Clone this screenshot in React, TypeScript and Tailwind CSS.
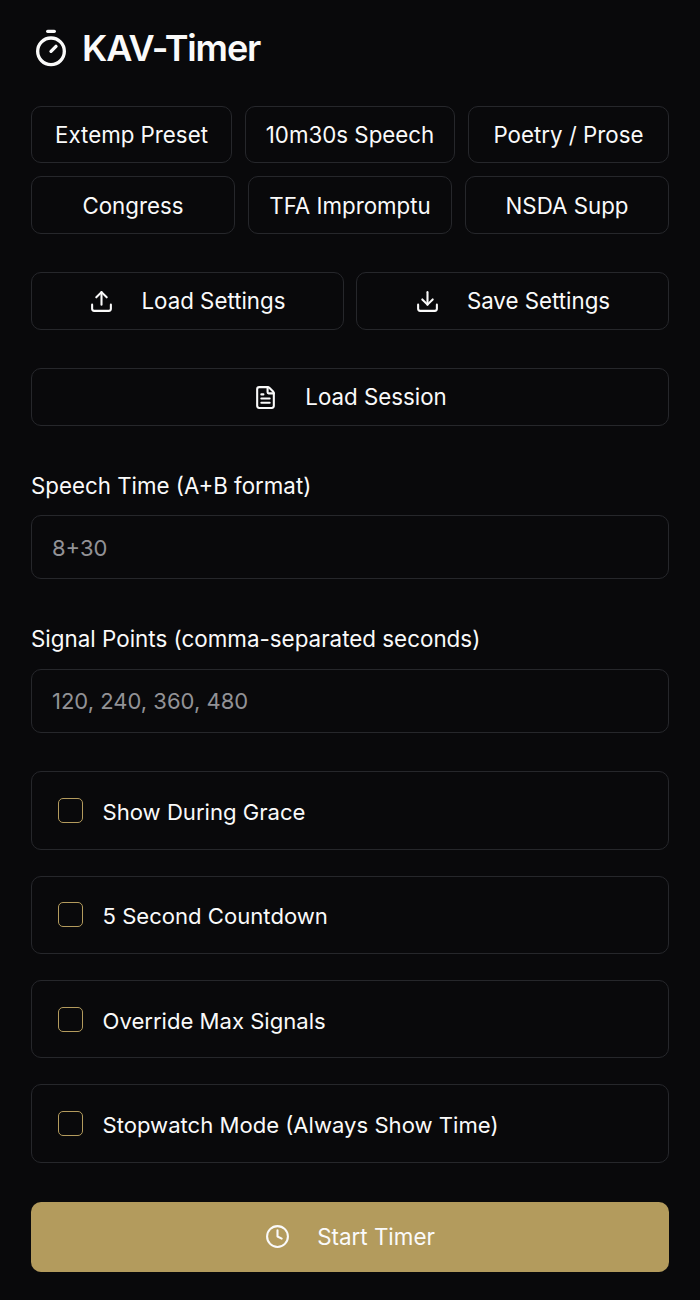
import { Clock, Download, FileText, Timer, Upload } from 'lucide-react';

const btn =
  'flex items-center justify-center rounded-[10px] border border-[#26272b] text-[#fafafa] text-[22.3px] leading-none';

const firstRow = ['Extemp Preset', '10m30s Speech', 'Poetry / Prose'];
const secondRow = ['Congress', 'TFA Impromptu', 'NSDA Supp'];
const options = [
  'Show During Grace',
  '5 Second Countdown',
  'Override Max Signals',
  'Stopwatch Mode (Always Show Time)',
];

const App = () => {
  return (
    <div className="w-[700px] h-[1300px] overflow-hidden bg-[#09090b] px-[31px] font-['Inter',sans-serif] text-[#fafafa]">
      {/* Header */}
      <div className="flex items-center h-[38px] mt-[29px] gap-[11px]">
        <Timer className="w-[40px] h-[40px]" strokeWidth={2} />
        <h1 className="text-[36px] font-semibold tracking-[-1.1px] leading-none">KAV-Timer</h1>
      </div>

      {/* Presets */}
      <div className="grid grid-cols-[201px_210px_201px] gap-[13px] mt-[39px] h-[57px]">
        {firstRow.map((name) => (
          <button key={name} className={`${btn} pt-[2px]`}>{name}</button>
        ))}
      </div>
      <div className="grid grid-cols-3 gap-[13px] mt-[13px] h-[58px]">
        {secondRow.map((name) => (
          <button key={name} className={`${btn} pt-[2px]`}>{name}</button>
        ))}
      </div>

      {/* Settings */}
      <div className="grid grid-cols-2 gap-[12px] mt-[38px] h-[58px]">
        <button className={`${btn} gap-[27px]`}>
          <Upload className="w-[25px] h-[25px]" strokeWidth={2} />
          <span className="pt-[1px]">Load Settings</span>
        </button>
        <button className={`${btn} gap-[27px]`}>
          <Download className="w-[25px] h-[25px]" strokeWidth={2} />
          <span className="pt-[1px]">Save Settings</span>
        </button>
      </div>
      <button className={`${btn} w-full h-[58px] mt-[38px] gap-[27px]`}>
        <FileText className="w-[25px] h-[25px]" strokeWidth={2} />
        <span className="pt-[1px]">Load Session</span>
      </button>

      {/* Inputs */}
      <label className="block mt-[47px] text-[22.3px] leading-[26px]">Speech Time (A+B format)</label>
      <input
        placeholder="8+30"
        className="block w-full h-[64px] mt-[16px] rounded-[10px] border border-[#26272b] bg-transparent px-[20px] pt-[2px] text-[22px] placeholder:text-[#929296] outline-none"
      />
      <label className="block mt-[47px] text-[22.4px] leading-[26px]">Signal Points (comma-separated seconds)</label>
      <input
        placeholder="120, 240, 360, 480"
        className="block w-full h-[64px] mt-[17px] rounded-[10px] border border-[#26272b] bg-transparent px-[20px] text-[22px] placeholder:text-[#929296] outline-none"
      />

      {/* Options */}
      <div className="flex flex-col gap-[25.67px] mt-[38.2px]">
        {options.map((name) => (
          <div key={name} className="flex items-center h-[78.67px] rounded-[10px] border border-[#26272b] pl-[26px] gap-[19.5px]">
            <span className="w-[25px] h-[25px] rounded-[5px] border border-[#b39b5d]" />
            <span className="text-[22.1px] leading-none pt-[3px]">{name}</span>
          </div>
        ))}
      </div>

      <button className="flex items-center justify-center w-full h-[70px] mt-[39px] rounded-[10px] bg-[#b39b5d] text-[22.4px] gap-[27px]">
        <Clock className="w-[25px] h-[25px]" strokeWidth={2} />
        Start Timer
      </button>
    </div>
  );
};

export default App;
